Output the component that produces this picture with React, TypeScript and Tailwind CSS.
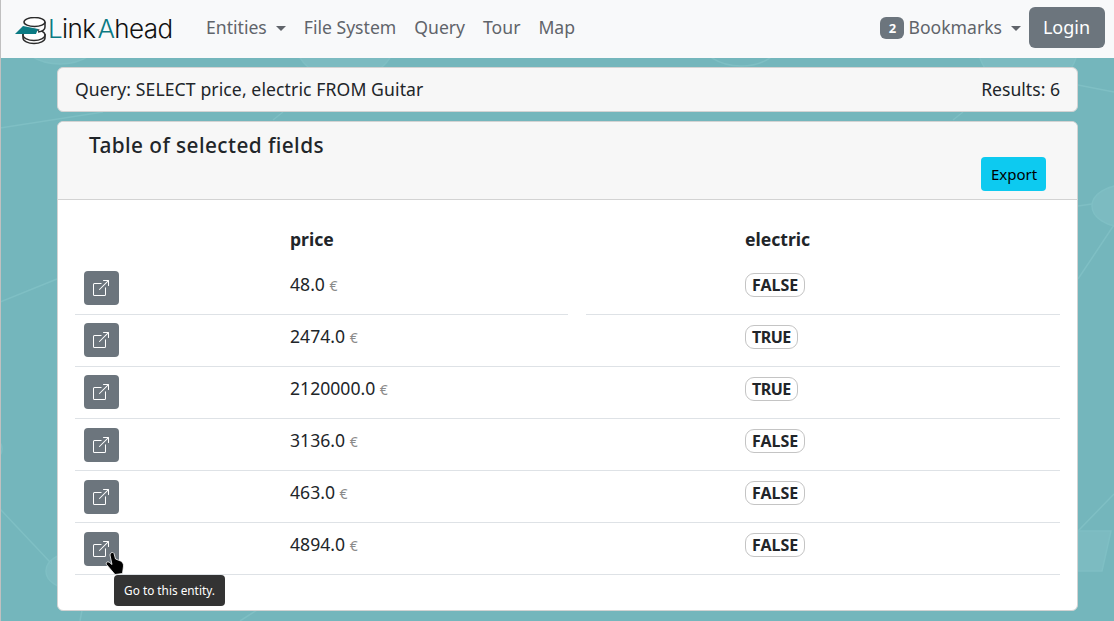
import { BsBoxArrowUpRight } from 'react-icons/bs'

const rows = [
  { price: '48.0', electric: 'FALSE' },
  { price: '2474.0', electric: 'TRUE' },
  { price: '2120000.0', electric: 'TRUE' },
  { price: '3136.0', electric: 'FALSE' },
  { price: '463.0', electric: 'FALSE' },
  { price: '4894.0', electric: 'FALSE' },
]

// Faint network pattern behind the page
function Backdrop() {
  return (
    <svg className="absolute inset-0 h-full w-full" viewBox="0 0 1114 621" fill="none" stroke="#7fbfc4" strokeWidth="1.5">
      <ellipse cx="1125" cy="206" rx="33" ry="21" fill="#7cbbc1" />
      <ellipse cx="72" cy="571" rx="26" ry="18" fill="#7cbbc1" />
      <ellipse cx="60" cy="38" rx="40" ry="26" fill="#7cbbc1" />
      <ellipse cx="345" cy="40" rx="50" ry="40" fill="#7cbbc1" />
      <ellipse cx="741" cy="40" rx="40" ry="26" />
      <ellipse cx="1028" cy="45" rx="50" ry="45" fill="#7cbbc1" />
      <circle cx="-10" cy="449" r="12" />
      <path d="M1078 85 L1114 92" />
      <path d="M1078 206 L1092 204" />
      <path d="M1114 225 L1078 279" />
      <path d="M1078 531 L1114 494" />
      <path d="M1078 531 H1111 L1102 571 H1078 Z" fill="#7cbbc1" />
      <path d="M0 128 L103 112" />
      <path d="M0 302 L57 279" />
      <path d="M0 509 L50 562" />
      <path d="M953 120 L963 112" />
      <path d="M273 120 L283 112" />
      <path d="M82 610 L80 621" />
      <path d="M257 610 L240 621" />
    </svg>
  )
}

function Cursor() {
  return (
    <svg className="absolute left-[21px] top-[20px] h-[23px] w-[20px]" viewBox="0 0 20 23">
      <path
        d="M6 1 C7 0 8.5 0.5 9 1.5 L10.5 7 L15.5 9 C17.5 10 18.5 11.5 18.5 14 L17.5 21.5 L10 22.5 L1.5 12.5 C0.5 10.5 2.5 9 4.5 10.5 L7 12.5 L5 3 C5 2 5.5 1.5 6 1 Z"
        fill="#000"
        stroke="#fff"
        strokeWidth="0.8"
      />
    </svg>
  )
}

function Logo() {
  return (
    <svg className="mt-[3px] h-[28px] w-[37px]" viewBox="0 0 37 28" fill="none" stroke="#2b2b2b" strokeWidth="1.5">
      <path d="M9 17 V21 C9 24 14 26.5 20 26.5 C26 26.5 31 24 31 21 V17" fill="#fff" />
      <ellipse cx="20" cy="18" rx="11" ry="5.5" fill="#fff" />
      <path d="M31 5 V10 C31 12.5 28 14.5 24 15" fill="#fff" />
      <ellipse cx="20.5" cy="5" rx="10.5" ry="4.5" fill="#fff" />
      <path d="M1 17 L9 9 L24 12 L22 17 Z" fill="#0b7a83" stroke="none" />
    </svg>
  )
}

export default function App() {
  return (
    <div className="relative h-[621px] w-[1114px] overflow-hidden bg-[#74b6bc] font-['Noto_Sans',sans-serif] text-[#212529]">
      <Backdrop />
      <div className="relative">
        <nav className="flex h-[58px] items-center bg-[#f8f9fa] pl-[14px] pr-[9px]">
          <a className="flex items-center">
            <Logo />
            <span className="ml-[-3px] font-['Inter',sans-serif] text-[26px] font-light leading-none tracking-[-0.6px] text-[#111]">
              <span className="text-[#0b7a83]">L</span>ink<span className="ml-[2px] text-[#0b7a83]">A</span>head
            </span>
          </a>
          <div className="mb-[3px] ml-[33.5px] flex items-center gap-[18px] text-[17.6px] text-[#60646a]">
            <a className="flex items-center">
              Entities
              <span className="ml-[9px] mt-[2px] border-x-[5px] border-t-[5px] border-x-transparent border-t-[#60646a]" />
            </a>
            <a>File System</a>
            <a>Query</a>
            <a>Tour</a>
            <a>Map</a>
          </div>
          <div className="mb-[3px] ml-auto flex items-center text-[17.6px] text-[#60646a]">
            <span className="flex h-[22px] w-[24px] items-center justify-center rounded-[6px] bg-[#6c757d] pt-[2px] text-[13px] font-bold text-white">2</span>
            <span className="ml-[4px]">Bookmarks</span>
            <span className="ml-[9px] mt-[2px] border-x-[5px] border-t-[5px] border-x-transparent border-t-[#60646a]" />
            <button className="ml-[8px] h-[41px] w-[76px] rounded-[6px] bg-[#6c757d] pr-[1px] text-[18px] text-white">Login</button>
          </div>
        </nav>

        <main className="ml-[57px] mt-[9px] w-[1021px]">
          <div className="flex h-[45px] items-center justify-between rounded-[6px] border border-[#d3d3d3] bg-[#f7f7f7] px-[17px] text-[17.6px]">
            <span className="tracking-[0.1px]">Query: SELECT price, electric FROM Guitar</span>
            <span>Results: 6</span>
          </div>

          <div className="mt-[9px] h-[490px] rounded-[6px] border border-[#d3d3d3] bg-white">
            <div className="flex h-[78px] justify-between rounded-t-[6px] border-b border-[#d3d3d3] bg-[#f7f7f7] px-[31px]">
              <h5 className="mt-[8px] text-[20.8px] font-medium leading-[30px] tracking-[0.42px]">Table of selected fields</h5>
              <button className="mt-[35px] h-[34px] w-[65px] rounded-[4px] bg-[#0dcaf0] pl-[1px] text-[15px] text-black">Export</button>
            </div>

            <div className="px-[17px] pt-[16px]">
              <div className="flex h-[47px] items-center text-[17.6px] font-bold">
                <span className="ml-[215px] w-[455px]">price</span>
                <span>electric</span>
              </div>
              {rows.map((row, i) => (
                <div key={i} className="relative flex h-[52px] items-start border-b border-[#dee2e6]">
                  <div className={i >= 3 ? 'relative ml-[9px] mt-[9px] flex h-[34px] w-[35px] items-center justify-center rounded-[4px] bg-[#6c757d] pr-[1px] text-white' : 'relative ml-[9px] mt-[8px] flex h-[34px] w-[35px] items-center justify-center rounded-[4px] bg-[#6c757d] pr-[1px] text-white'}>
                    <BsBoxArrowUpRight size={16} />
                    {i === 5 && <Cursor />}
                  </div>
                  <span className="ml-[171px] mt-[8px] w-[455px] text-[17.6px]">
                    {row.price} <span className="text-[14px] text-[#8a8a8a]">€</span>
                  </span>
                  <span className={row.electric === 'TRUE' ? 'mt-[10px] rounded-[9px] border border-[#c4c4c4] px-[6px] text-[16px] font-bold leading-[22px] tracking-[-0.5px]' : 'mt-[10px] rounded-[9px] border border-[#c4c4c4] px-[6px] text-[16px] font-bold leading-[22px]'}>{row.electric}</span>
                  {i === 0 && <span className="absolute bottom-[-1px] left-[493px] h-[1px] w-[18px] bg-white" />}
                </div>
              ))}
            </div>
          </div>
        </main>

        <div className="absolute left-[114px] top-[575px] flex h-[31px] w-[111px] items-center justify-center rounded-[4px] bg-[#333] text-[11.8px] text-white">
          Go to this entity.
        </div>
      </div>
      <div className="absolute inset-y-0 left-0 w-[1px] bg-[#c0c0c0]" />
    </div>
  )
}
